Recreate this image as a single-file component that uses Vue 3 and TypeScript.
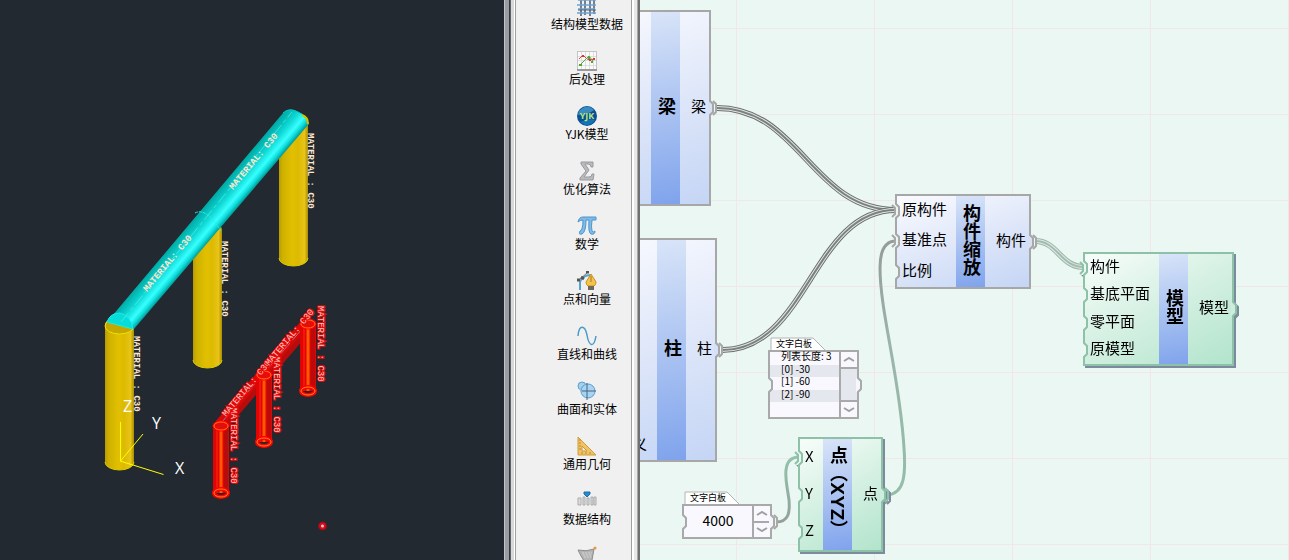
<script setup lang="ts">
import { ref } from 'vue'

interface Port {
  name: string
  linked: boolean
}

interface GraphNode {
  id: string
  tone: 'blue' | 'green'
  x: number
  y: number
  w: number
  h: number
  title: string
  tail?: boolean
  inputs: Port[]
  output: Port
}

const tools = [
  { icon: 'grid', label: '结构模型数据' },
  { icon: 'chart', label: '后处理' },
  { icon: 'yjk', label: 'YJK模型' },
  { icon: 'sigma', label: '优化算法' },
  { icon: 'pi', label: '数学' },
  { icon: 'pen', label: '点和向量' },
  { icon: 'wave', label: '直线和曲线' },
  { icon: 'solid', label: '曲面和实体' },
  { icon: 'triangle', label: '通用几何' },
  { icon: 'data', label: '数据结构' },
  { icon: 'mesh', label: '' },
]

const nodes: GraphNode[] = [
  { id: 'beam', tone: 'blue', x: -60, y: 10, w: 131, h: 196, title: '梁', inputs: [], output: { name: '梁', linked: true } },
  {
    id: 'column', tone: 'blue', x: -60, y: 238, w: 137, h: 224, title: '柱', tail: true,
    inputs: [{ name: '义', linked: false }],
    output: { name: '柱', linked: true },
  },
  {
    id: 'scale', tone: 'blue', x: 255, y: 194, w: 136, h: 95, title: '构件缩放',
    inputs: [{ name: '原构件', linked: true }, { name: '基准点', linked: true }, { name: '比例', linked: false }],
    output: { name: '构件', linked: true },
  },
  {
    id: 'model', tone: 'green', x: 443, y: 252, w: 151, h: 114, title: '模型',
    inputs: [
      { name: '构件', linked: true }, { name: '基底平面', linked: false },
      { name: '零平面', linked: false }, { name: '原模型', linked: false },
    ],
    output: { name: '模型', linked: false },
  },
  {
    id: 'point', tone: 'green', x: 158, y: 437, w: 85, h: 115, title: '点（XYZ）',
    inputs: [{ name: 'X', linked: true }, { name: 'Y', linked: false }, { name: 'Z', linked: false }],
    output: { name: '点', linked: true },
  },
]

const boxStyle = (n: GraphNode) => ({
  left: `${n.x}px`,
  top: `${n.y}px`,
  width: `${n.w}px`,
  height: `${n.h}px`,
})

const tripleWires = [
  { id: 'a', tone: 'grey', d: 'M77 108 C160 108 172 210 256 210' },
  { id: 'b', tone: 'grey', d: 'M82 350 C168 350 172 210 256 210' },
  { id: 'c', tone: 'sage', d: 'M395 241 C418 241 420 267 444 267' },
]

const rows = ['列表长度: 3', '[0] -30', '[1] -60', '[2] -90']
const amount = ref('4000')

const yellowColumns = [
  { x: 279, top: 122, bottom: 258 },
  { x: 193, top: 230, bottom: 360 },
  { x: 105, top: 325, bottom: 462 },
]
const redColumns = [
  { x: 308, top: 324, bottom: 391 },
  { x: 264, top: 375, bottom: 442 },
  { x: 221, top: 426, bottom: 493 },
]
const beamMarks = [
  { x: 233, y: 190 },
  { x: 147, y: 292 },
]
</script>

<template>
  <main class="app">
    <section class="viewport" aria-label="三维视图">
      <svg class="scene" width="504" height="560" viewBox="0 0 504 560">
        <defs>
          <linearGradient id="gold">
            <stop offset="0" stop-color="#b89c00" />
            <stop offset="0.12" stop-color="#cdb000" />
            <stop offset="0.45" stop-color="#e2c000" />
            <stop offset="0.65" stop-color="#dcba00" />
            <stop offset="0.88" stop-color="#e8c418" />
            <stop offset="1" stop-color="#a88c00" />
          </linearGradient>
          <linearGradient id="cyan" gradientUnits="userSpaceOnUse" x1="195" y1="217" x2="215" y2="234">
            <stop offset="0" stop-color="#00a8a4" />
            <stop offset="0.25" stop-color="#08c4c0" />
            <stop offset="0.45" stop-color="#12dcd8" />
            <stop offset="0.7" stop-color="#38ffff" />
            <stop offset="0.85" stop-color="#10dedc" />
            <stop offset="1" stop-color="#009c98" />
          </linearGradient>
        </defs>

        <g v-for="c in yellowColumns" :key="c.x">
          <path
            :d="`M${c.x} ${c.top} A14.5 8 0 0 1 ${c.x + 29} ${c.top} V${c.bottom} A14.5 8 0 0 1 ${c.x} ${c.bottom} Z`"
            fill="url(#gold)"
          />
          <path :d="`M${c.x} ${c.bottom} A14.5 8 0 0 0 ${c.x + 29} ${c.bottom}`" fill="none" stroke="#d8c800" />
          <text class="mark" :transform="`translate(${c.x + 29} ${c.top + 11}) rotate(90)`">MATERIAL :  C30</text>
        </g>
        <ellipse cx="119.500" cy="326" rx="14.500" ry="8" fill="#c4a800" stroke="#f0e000" />

        <path d="M107 322 L283 113 Q289 107 298 112 Q308 116 308 125 L134 329 Z" fill="url(#cyan)" />
        <path d="M107 322 Q110 313 120 313 Q131 316 133 329 Z" fill="#08dcd8" stroke="#10f0ec" />
        <path d="M195 213 Q206 207 221 231" fill="none" stroke="#20f0ec" stroke-dasharray="3 1" />
        <path d="M121 322 L292 112" stroke="#50f0ee" stroke-dasharray="12 3 4 3" opacity="0.7" />
        <path d="M283 113 Q289 107 298 112 Q308 116 308 125" fill="none" stroke="#00d0cc" />
        <path d="M302 115 Q308 117 308 124" fill="none" stroke="#d0c000" stroke-width="2" />
        <text v-for="m in beamMarks" :key="m.x" class="mark" :transform="`translate(${m.x} ${m.y}) rotate(-50)`">MATERIAL: C30</text>

        <path d="M221 425 L308 323" stroke="#d80808" stroke-width="13" />
        <path d="M226 426 L310 328" stroke="#b80c0c" stroke-width="5" />
        <path d="M222 422 L308 322" stroke="#888" stroke-dasharray="14 4" />
        <g v-for="c in redColumns" :key="c.x">
          <rect :x="c.x - 8" :y="c.top" width="16" :height="c.bottom - c.top" fill="#e00404" />
          <rect :x="c.x + 3" :y="c.top" width="4" :height="c.bottom - c.top" fill="#b80c0c" />
          <path :d="`M${c.x - 4} ${c.top} V${c.bottom}`" stroke="#ff2a10" />
          <path :d="`M${c.x} ${c.top + 3} V${c.bottom}`" stroke="#ff5a00" stroke-width="3" />
          <ellipse :cx="c.x" :cy="c.top" rx="7" ry="4" fill="#e01010" stroke="#ff0000" stroke-width="3" />
          <ellipse :cx="c.x" :cy="c.top" rx="7" ry="4" fill="none" stroke="#ff7a20" />
          <ellipse :cx="c.x" :cy="c.bottom" rx="7" ry="4" fill="none" stroke="#ff0000" stroke-width="4" />
          <ellipse :cx="c.x" :cy="c.bottom" rx="7" ry="4" fill="none" stroke="#ff8a20" />
          <text class="mark hot" :transform="`translate(${c.x + 10} ${c.top - 18}) rotate(90)`">MATERIAL :  C30</text>
        </g>
        <text class="mark hot" transform="translate(226 417) rotate(-50)">MATERIAL: C30</text>
        <text class="mark hot" transform="translate(269 366) rotate(-50)">MATERIAL: C30</text>

        <path d="M120.500 422 V461 L143 434 M120 461 L163.500 474.500" fill="none" stroke="#ffff00" />
        <text class="axis" x="123" y="412">Z</text>
        <text class="axis" x="152" y="429">Y</text>
        <text class="axis" x="175" y="474">X</text>
        <circle cx="322.500" cy="526" r="4" fill="#d80c18" stroke="#8c1018" />
        <circle cx="322.500" cy="526" r="1.500" fill="#f4c8cc" />
      </svg>
    </section>

    <nav class="toolbox" aria-label="工具">
      <div class="tools">
        <button v-for="t in tools" :key="t.icon" type="button" class="tool" :aria-label="t.label || t.icon">
          <svg class="tool-icon" width="20" height="20" viewBox="0 0 20 20" fill="none">
            <template v-if="t.icon === 'grid'">
              <path d="M4 0V20M8 0V19M13 0V20M17 0V18" stroke="#4d5a68" stroke-width="1.500" />
              <path d="M1 4H19M0 9H19M1 13H18M0 17H19" stroke="#68a4d8" stroke-width="1.500" />
              <path d="M1 14H19" stroke="#59636e" />
            </template>
            <template v-else-if="t.icon === 'chart'">
              <rect x="0.500" y="0.500" width="19" height="18" fill="#fafafa" stroke="#c4c4c4" />
              <path d="M4.500 1V18M8.500 1V18M12.500 1V18M16.500 1V18M1 5.500H19M1 9.500H19M1 14.500H19" stroke="#dedede" />
              <path d="M0 19H20" stroke="#999" stroke-width="2" />
              <path d="M2 8L6 4L10 8L13 9L17 8" stroke="#d04840" />
              <path d="M3 14L9 8L12 5L16 10" stroke="#58a838" />
              <path d="M5 5h2M12 9h2M16 8h2" stroke="#d83830" stroke-width="2" />
              <path d="M2 14h3M11 7h2M14 11h2" stroke="#50a830" stroke-width="2" />
            </template>
            <template v-else-if="t.icon === 'yjk'">
              <circle cx="10" cy="10" r="10" fill="#0b4f97" />
              <path d="M2 5Q10-3 17 4Q13 8 1 9Z" fill="#3a8cc0" />
              <path d="M3 16Q12 12 18 14Q14 20 8 19Z" fill="#1274b4" />
              <text class="logo" x="10" y="13" text-anchor="middle">YJK</text>
            </template>
            <path
              v-else-if="t.icon === 'sigma'"
              d="M4 1H16V6H14Q14 3 11 3H8L12 9L7 16H12Q15 16 15 13H17L16 19H3V17L9 10L4 3Z"
              fill="#b8babc" stroke="#989a9c"
            />
            <path
              v-else-if="t.icon === 'pi'"
              d="M1 6Q2 1 6 1H19V4H15Q14 11 15 15Q16 17 18 15Q18 19 14 18Q11 17 12 4H9Q9 16 5 18Q1 19 3 15Q6 14 6 4Q3 4 1 6Z"
              fill="#7dbbe8" stroke="#4e94cc"
            />
            <template v-else-if="t.icon === 'pen'">
              <path d="M3 19V11Q5 4 14 4" stroke="#55a4d0" stroke-width="2" />
              <path d="M1 10L11 1" stroke="#777" />
              <path d="M0 9h3M9 1h3M4 6l3 2" stroke="#555" stroke-width="3" />
              <path d="M14 3L19 11Q19 14 17 15H11Q9 14 9 11Z" fill="#f2c34e" stroke="#c99420" />
              <path d="M14 5V11" stroke="#a87818" />
              <path d="M11 16H17M11 18H17" stroke="#6d665c" stroke-width="2" />
            </template>
            <path v-else-if="t.icon === 'wave'" d="M1 10C2-2 8-1 10 9C12 21 17 22 19 10" stroke="#4c9acc" stroke-width="1.500" />
            <template v-else-if="t.icon === 'solid'">
              <circle cx="5" cy="5" r="4" fill="#a4d0f0" stroke="#609cc8" />
              <path d="M2 8L8 16L16 6L9 2Z" fill="#9ccaee" />
              <circle cx="11" cy="10" r="7" fill="#a8d4f2" stroke="#5c9ccc" />
              <path d="M5 10H19M10 2V19" stroke="#48647c" />
            </template>
            <template v-else-if="t.icon === 'triangle'">
              <path d="M1 1L19 19H1Z" fill="#eec468" stroke="#d29c38" />
              <path d="M5 10L10 15H5Z" fill="#f0f0f0" stroke="#cf9a38" />
              <path d="M2 4h2M2 7h2M2 10h2M2 13h2M5 18v-2M9 18v-2M13 18v-2" stroke="#c08828" />
            </template>
            <template v-else-if="t.icon === 'data'">
              <path d="M7 1H13V3L10 6L7 3Z" fill="#2888d0" stroke="#1c6cac" />
              <path d="M1 7h3v7H1ZM6 6h2v8H6ZM10 7h2v7h-2ZM14 6h2v8h-2ZM17 6h2v8h-2Z" fill="#dcdcdc" stroke="#acacac" />
            </template>
            <template v-else>
              <path d="M1 4Q9 6 17 3L15 14Q14 18 10 17Q7 16 4 10Z" fill="#b4b4b4" stroke="#8c8c8c" />
              <path d="M5 7h10M6 9h9M7 11h7" stroke="#d4d4d4" stroke-dasharray="2 1" />
              <circle cx="18" cy="2" r="1.500" fill="#e89838" />
            </template>
          </svg>
          <span>{{ t.label }}</span>
        </button>
      </div>
    </nav>

    <section class="canvas" aria-label="节点图">
      <svg class="wires">
        <defs>
          <linearGradient id="mix" x1="0" y1="0" x2="0" y2="1">
            <stop offset="0" stop-color="#959b98" />
            <stop offset="0.4" stop-color="#9bb4aa" />
            <stop offset="1" stop-color="#93bda9" />
          </linearGradient>
          <linearGradient id="mix-up" x1="0" y1="1" x2="0" y2="0">
            <stop offset="0" stop-color="#92a099" />
            <stop offset="1" stop-color="#93c4ac" />
          </linearGradient>
        </defs>
        <g v-for="w in tripleWires" :key="w.id" fill="none" :class="w.tone">
          <path :d="w.d" class="outer" />
          <path :d="w.d" class="gap" />
          <path :d="w.d" class="core" />
        </g>
        <path
          d="M247 495 C264 494 266 476 264 448 C260 378 240 312 240 268 C240 250 245 241 256 241"
          fill="none" stroke="url(#mix)" stroke-width="3"
        />
        <path
          d="M136 522 C149 522 150 512 149 500 C147 485 145 480 146 470 C147 461 151 457 159 457"
          fill="none" stroke="url(#mix-up)" stroke-width="3"
        />
      </svg>

      <article v-for="n in nodes" :key="n.id" class="node" :class="[n.tone, { tail: n.tail }]" :style="boxStyle(n)">
        <ul class="inputs">
          <li v-for="p in n.inputs" :key="p.name">
            <svg class="port in" width="8" height="16" viewBox="0 0 8 16">
              <path d="M-1 1H1L4 4V12L1 15H-1Z" class="hole" />
              <path d="M1 0V1L4 4V12L1 15V16" class="rim" />
              <path v-if="p.linked" d="M-3 2L0 5V11L-3 14" class="rim" />
            </svg>
            {{ p.name }}
          </li>
        </ul>
        <h2 class="title">{{ n.title }}</h2>
        <div class="output">
          {{ n.output.name }}
          <svg class="port out" width="8" height="16" viewBox="0 0 8 16">
            <path d="M-1 1H1L4 4V12L1 15H-1Z" class="fill" />
            <path d="M1 0V1L4 4V12L1 15V16" class="rim" />
            <path v-if="n.output.linked" d="M4 1L7 4V12L4 15" class="rim" />
          </svg>
        </div>
      </article>

      <article class="board list-board">
        <header class="tab">
          <svg width="56" height="14" viewBox="0 0 56 14"><path d="M1 14V1H43L55 13" /></svg>
          <span>文字白板</span>
        </header>
        <div class="board-box">
          <svg class="port in" width="8" height="16" viewBox="0 0 8 16">
            <path d="M-1 1H1L4 4V12L1 15H-1Z" class="hole" />
            <path d="M1 0V1L4 4V12L1 15V16" class="rim" />
          </svg>
          <ul class="rows">
            <li v-for="r in rows" :key="r">{{ r }}</li>
          </ul>
          <div class="steps">
            <button type="button" aria-label="上移"><svg width="12" height="5" viewBox="0 0 12 5"><path d="M1 4L6 1L11 4" /></svg></button>
            <i></i>
            <button type="button" aria-label="下移"><svg width="12" height="5" viewBox="0 0 12 5"><path d="M1 1L6 4L11 1" /></svg></button>
          </div>
          <svg class="port out" width="8" height="16" viewBox="0 0 8 16">
            <path d="M-1 1H1L4 4V12L1 15H-1Z" class="fill" />
            <path d="M1 0V1L4 4V12L1 15V16" class="rim" />
          </svg>
        </div>
      </article>

      <article class="board number-board">
        <label class="tab" for="amount">
          <svg width="56" height="14" viewBox="0 0 56 14"><path d="M1 14V1H43L55 13" /></svg>
          <span>文字白板</span>
        </label>
        <div class="board-box">
          <svg class="port in" width="8" height="16" viewBox="0 0 8 16">
            <path d="M-1 1H1L4 4V12L1 15H-1Z" class="hole" />
            <path d="M1 0V1L4 4V12L1 15V16" class="rim" />
          </svg>
          <input id="amount" v-model="amount" type="text" />
          <div class="steps">
            <button type="button" aria-label="增加"><svg width="12" height="5" viewBox="0 0 12 5"><path d="M1 4L6 1L11 4" /></svg></button>
            <button type="button" aria-label="减少"><svg width="12" height="5" viewBox="0 0 12 5"><path d="M1 1L6 4L11 1" /></svg></button>
          </div>
          <svg class="port out" width="8" height="16" viewBox="0 0 8 16">
            <path d="M-1 1H1L4 4V12L1 15H-1Z" class="fill" />
            <path d="M1 0V1L4 4V12L1 15V16" class="rim" />
            <path d="M4 1L7 4V12L4 15" class="rim" />
          </svg>
        </div>
      </article>
    </section>
  </main>
</template>

<style>
body {
  overflow: hidden;
}
</style>

<style scoped>
.app {
  display: flex;
  height: 100vh;
  overflow: hidden;
  color: #000;
  font-family: "Noto Sans CJK SC", "Noto Sans", sans-serif;
}

ul,
h2 {
  margin: 0;
  padding: 0;
  list-style: none;
}

svg {
  display: block;
  flex: none;
}

.viewport {
  flex: 1 1 504px;
  min-width: 0;
  overflow: hidden;
  background: #222930;
}

.mark {
  font: bold 9px "Liberation Mono", monospace;
  fill: #ffe6cc;
  white-space: pre;
}

.hot {
  font-weight: 400;
  fill: #ffc8c0;
  stroke: #e80808;
  stroke-width: 2px;
  paint-order: stroke;
}

.axis {
  font: 16px "Open Sans", sans-serif;
  fill: #fff;
}

.toolbox {
  flex: none;
  display: flex;
  width: 136px;
  box-sizing: border-box;
  padding: 0 9px 0 12px;
  background: linear-gradient(
    90deg,
    #c4c4c8 0 1px, #9a9ca6 1px 5px, #34383e 5px 6px, #606468 6px 7px, #d8d8d8 7px 10px, #fff 10px 11px, #a0a0a0 11px 12px,
    #f0f0f0 12px 127px, #a0a0a0 127px 128px, #fff 128px 130px, #e8e8e8 130px 133px, #a8a8a8 133px 134px, #707070 134px 136px
  );
}

.tools {
  flex: 1;
  display: flex;
  flex-direction: column;
  gap: 19px;
  margin-top: -4px;
  padding-left: 27px;
  overflow: hidden;
}

.tool {
  flex: none;
  display: flex;
  flex-direction: column;
  align-items: center;
  height: 36px;
  padding: 0;
  border: 0;
  background: none;
  color: #000;
  font: 12px/16px "Noto Sans CJK SC", sans-serif;
  white-space: nowrap;
}

.logo {
  font: bold 9px "Open Sans", sans-serif;
  fill: #b8e878;
}

.canvas {
  position: relative;
  flex: 1 1 649px;
  min-width: 0;
  overflow: hidden;
  background-color: #ebf7f3;
  background-image:
    linear-gradient(90deg, #f2e7e7 1px, transparent 1px),
    linear-gradient(#f2e7e7 1px, transparent 1px);
  background-size: 138px 100%, 100% 86px;
  background-position: 96px 0, 0 28px;
}

.wires {
  position: absolute;
  width: 100%;
  height: 100%;
}

.outer { stroke-width: 6; }
.gap { stroke-width: 4; stroke: #dfe8e4; }
.core { stroke-width: 2; }
.grey .outer { stroke: #6c706f; }
.grey .core { stroke: #7c807e; }
.sage .outer { stroke: #9ab8aa; }
.sage .core { stroke: #a4bcb0; }

.node {
  --edge: #a7a7a7;
  --fill: #d6e1f8;
  position: absolute;
  z-index: 1;
  display: grid;
  grid-template-columns: 1fr 29px auto;
  box-sizing: border-box;
  border: 2px solid var(--edge);
  background: linear-gradient(160deg, #fafbff, #dfe7f9 50%, #c4d5f5);
  font-size: 15px;
  line-height: 20px;
  white-space: nowrap;
}

.green {
  --edge: #8dc2a9;
  --fill: #cdeede;
  background: linear-gradient(150deg, #f8fdfa, #d4f0e2 50%, #b2e4cc);
  filter: drop-shadow(2px 2px 0 #7b8b9b);
}

.inputs {
  display: flex;
  flex-direction: column;
}

.inputs li {
  position: relative;
  flex: 1;
  display: flex;
  align-items: center;
  padding: 0 0 4px 5px;
}

.tail .inputs {
  justify-content: flex-end;
}

.tail .inputs li {
  flex: 0 0 24px;
  justify-content: flex-end;
  padding-right: 10px;
}

.title {
  display: flex;
  align-items: center;
  justify-content: center;
  padding-bottom: 4px;
  writing-mode: vertical-rl;
  background: linear-gradient(170deg, #d8e4f8, #7fa3ec);
  font-family: Inter, "Noto Sans CJK SC", sans-serif;
  font-size: 18px;
  font-weight: 700;
  line-height: 29px;
}

.output {
  position: relative;
  display: flex;
  align-items: center;
  padding: 0 3px 4px 11px;
}

.port {
  position: absolute;
  top: calc(50% - 8px);
  overflow: visible;
}

.in { left: -2px; }
.out { right: -8px; }

.hole { fill: #ebf7f3; }
.fill { fill: var(--fill); }

.rim {
  fill: none;
  stroke: var(--edge);
  stroke-width: 2;
}

.board {
  --edge: #a9a9a9;
  --fill: #f6f7fd;
  position: absolute;
  z-index: 1;
  display: flex;
  flex-direction: column;
}

.list-board {
  left: 128px;
  top: 337px;
  width: 91px;
}

.number-board {
  left: 42px;
  top: 491px;
  width: 90px;
}

.tab {
  position: relative;
  height: 13px;
  padding-left: 8px;
  font-size: 9px;
  line-height: 13px;
}

.tab svg {
  position: absolute;
  left: 2px;
  top: 0;
  fill: #fff;
  stroke: #b4b4b4;
}

.tab span {
  position: relative;
}

.board-box {
  position: relative;
  display: flex;
  border: 2px solid var(--edge);
  background: #f8f8fe;
}

.list-board .board-box { height: 65px; }
.number-board .board-box { height: 31px; }

.rows {
  flex: 1;
  display: flex;
  flex-direction: column;
  height: 50px;
  font-size: 10px;
  line-height: 8px;
  white-space: nowrap;
}

.rows li {
  flex: 1;
  padding-left: 11px;
}

.rows li:nth-child(even) {
  background: #e4e7ee;
}

.steps {
  display: flex;
  flex-direction: column;
  width: 16px;
  border-left: 2px solid var(--edge);
}

.steps button {
  flex: 1;
  display: flex;
  align-items: center;
  justify-content: center;
  padding: 0;
  border: 0;
  background: #f8f8fe;
}

.steps button + button {
  border-top: 2px solid var(--edge);
}

.steps svg {
  fill: none;
  stroke: #a0a0a0;
  stroke-width: 2;
}

.steps i {
  flex: 0 0 31px;
  border: solid var(--edge);
  border-width: 2px 0;
  background: #e4e7ee;
}

input {
  flex: 1;
  min-width: 0;
  padding: 0 0 3px;
  border: 0;
  background: none;
  color: #000;
  font: 14px "Noto Sans CJK SC", sans-serif;
  text-align: center;
}
</style>
